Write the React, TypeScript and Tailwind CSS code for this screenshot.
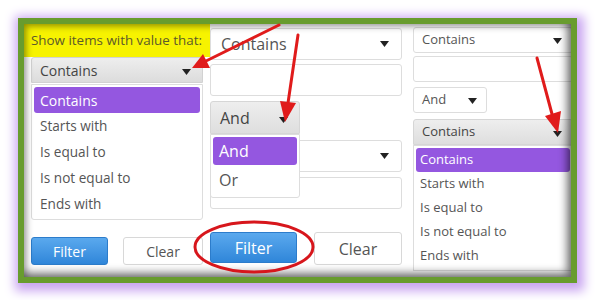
import React from "react";

const Caret = ({ className = "" }: { className?: string }) => (
  <svg width="9" height="6" viewBox="0 0 9 6" className={className}>
    <polygon points="0,0 9,0 4.5,6" fill="#222" />
  </svg>
);

const font = { fontFamily: '"Open Sans", "Noto Sans", sans-serif' };

export default function App() {
  return (
    <div className="w-[595px] h-[300px] bg-white relative overflow-hidden pt-[18px] pl-[18px]" style={font}>
      <div className="w-[559px] h-[265px] border-[6px] border-[#689c2e] shadow-[2px_3px_10px_5px_#c9a5f1] bg-white relative overflow-hidden">
        <div className="flex h-full">
          {/* Left panel */}
          <div className="w-[186px] flex flex-col shrink-0">
            <div className="h-[33px] bg-[#f7f300] pl-[7px] flex items-center text-[13.4px] text-[#5c5a2a]">
              Show items with value that:
            </div>
            <div className="px-[7px] pr-[7px] flex flex-col">
              <div className="h-[26px] w-[172px] bg-gradient-to-b from-[#eeeeee] to-[#dcdcdc] border border-[#d2d2d2] rounded-t-[3px] flex items-center justify-between pl-[8px] pr-[11px] text-[14px] text-[#444]">
                <span>Contains</span>
                <Caret className="mt-[3px]" />
              </div>
              <div className="mt-[1px] w-[172px] border border-[#dddddd] rounded-b-[3px] p-[2px] flex flex-col text-[13.6px] text-[#555]">
                <div className="h-[26px] bg-[#9457e0] rounded-[3px] text-white flex items-center pl-[6px] text-[14px]">Contains</div>
                <div className="h-[26px] flex items-center pl-[6px]">Starts with</div>
                <div className="h-[26px] flex items-center pl-[6px]">Is equal to</div>
                <div className="h-[26px] flex items-center pl-[6px]">Is not equal to</div>
                <div className="h-[26px] flex items-center pl-[6px]">Ends with</div>
              </div>
              <div className="mt-[17px] flex gap-[15px]">
                <div className="w-[77px] h-[28px] rounded-[3px] bg-gradient-to-b from-[#5aa9ee] to-[#2f86d9] border border-[#2c7ccb] text-white text-[14px] flex items-center justify-center">Filter</div>
                <div className="w-[80px] h-[28px] rounded-[3px] bg-white border border-[#d8d8d8] text-[#555] text-[14px] flex items-center justify-center">Clear</div>
              </div>
            </div>
          </div>

          {/* Middle panel */}
          <div className="w-[192px] shrink-0 flex flex-col pt-[4px] text-[16px] text-[#555]">
            <div className="h-[32px] border border-[#dddddd] rounded-[3px] flex items-center justify-between pl-[10px] pr-[12px]">
              <span>Contains</span>
              <Caret />
            </div>
            <div className="mt-[4px] h-[32px] border border-[#dddddd] rounded-[3px]" />
            <div className="mt-[5px] relative w-[90px]">
              <div className="h-[33px] bg-gradient-to-b from-[#eeeeee] to-[#dedede] border border-[#d6d6d6] rounded-t-[3px] flex items-center justify-between pl-[9px] pr-[11px] text-[#444]">
                <span>And</span>
                <Caret className="mt-[5px]" />
              </div>
              <div className="absolute left-0 top-full z-10 w-[90px] bg-white border border-[#dddddd] rounded-b-[3px] p-[2px] flex flex-col">
                <div className="h-[28px] bg-[#9457e0] rounded-[3px] text-white flex items-center pl-[6px]">And</div>
                <div className="h-[30px] flex items-center pl-[6px]">Or</div>
              </div>
            </div>
            <div className="mt-[6px] h-[32px] border border-[#dddddd] rounded-[3px] flex items-center justify-end pr-[12px]">
              <Caret />
            </div>
            <div className="mt-[5px] h-[32px] border border-[#dddddd] rounded-[3px]" />
            <div className="mt-[23px] flex gap-[17px] items-start">
              <div className="w-[87px] h-[31px] rounded-[3px] bg-gradient-to-b from-[#5aa9ee] to-[#2f86d9] border border-[#2c7ccb] text-white text-[16px] flex items-center justify-center">Filter</div>
              <div className="w-[88px] h-[33px] rounded-[3px] bg-white border border-[#d8d8d8] text-[#555] text-[16px] flex items-center justify-center">Clear</div>
            </div>
          </div>

          {/* Right panel */}
          <div className="ml-[11px] w-[160px] shrink-0 flex flex-col pt-[3px] text-[13px] text-[#555]">
            <div className="h-[26px] border border-[#dddddd] rounded-[3px] flex items-center justify-between pl-[8px] pr-[10px]">
              <span>Contains</span>
              <Caret className="mt-[2px]" />
            </div>
            <div className="mt-[3px] h-[26px] border border-[#dddddd] rounded-[3px]" />
            <div className="mt-[5px] w-[74px] h-[26px] border border-[#dddddd] rounded-[3px] flex items-center justify-between pl-[8px] pr-[9px]">
              <span>And</span>
              <Caret className="mt-[1px]" />
            </div>
            <div className="mt-[6px] h-[26px] bg-gradient-to-b from-[#eeeeee] to-[#dedede] border border-[#d6d6d6] rounded-t-[3px] flex items-center justify-between pl-[8px] pr-[10px] text-[#444]">
              <span>Contains</span>
              <Caret className="mt-[4px]" />
            </div>
            <div className="border border-[#dddddd] p-[2px] flex flex-col">
              <div className="h-[24px] bg-[#9457e0] rounded-[3px] text-white flex items-center pl-[4px]">Contains</div>
              <div className="h-[24px] flex items-center pl-[4px]">Starts with</div>
              <div className="h-[24px] flex items-center pl-[4px]">Is equal to</div>
              <div className="h-[24px] flex items-center pl-[4px]">Is not equal to</div>
              <div className="h-[24px] flex items-center pl-[4px]">Ends with</div>
            </div>
          </div>
        </div>
        {/* inner shadow overlay */}
        <div className="absolute inset-0 pointer-events-none shadow-[inset_-4px_-4px_9px_rgba(0,0,0,0.55),inset_3px_3px_6px_rgba(0,0,0,0.3)]" />
      </div>

      {/* annotations */}
      <svg className="absolute inset-0 pointer-events-none" width="595" height="300" viewBox="0 0 595 300">
        <g stroke="#e01b1b" strokeWidth="3" strokeLinecap="round" fill="none">
          <line x1="279" y1="25" x2="206" y2="61" />
          <line x1="298" y1="35" x2="288" y2="103" />
          <line x1="537" y1="58" x2="552" y2="114" />
        </g>
        <g fill="#e01b1b">
          <polygon points="192,68 210,68 203,54" />
          <polygon points="285,122 296,103 280,101" />
          <polygon points="558,133 545,116 561,111" />
        </g>
        <ellipse cx="254" cy="247" rx="59" ry="25" fill="none" stroke="#d7161c" strokeWidth="3" />
      </svg>
    </div>
  );
}
